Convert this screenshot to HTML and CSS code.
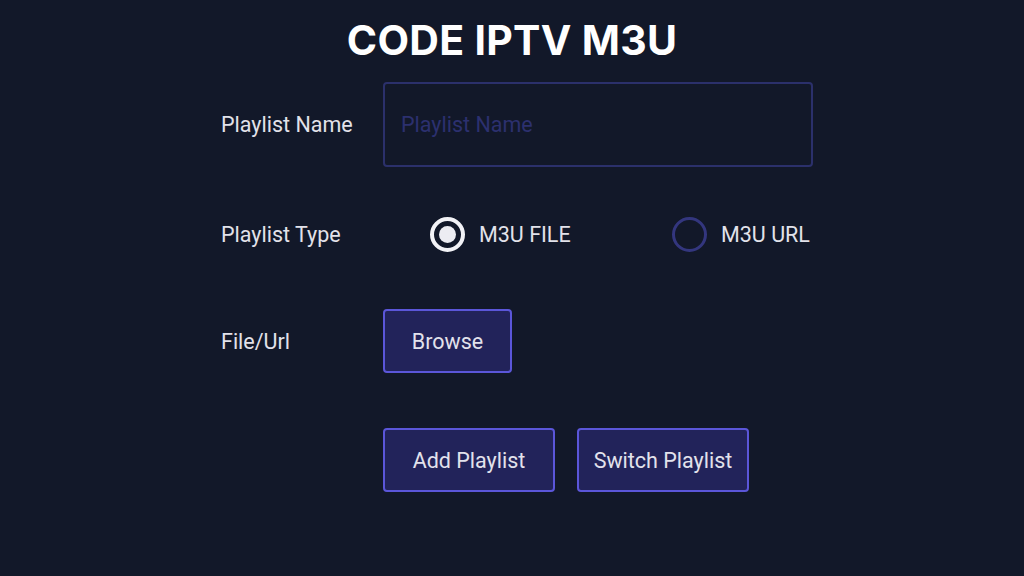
FILE: index.html
```html
<!DOCTYPE html>
<html lang="en">
<head>
<meta charset="utf-8">
<title>CODE IPTV M3U</title>
<link rel="stylesheet" href="styles.css">
</head>
<body>
<main class="page">
  <h1 class="title">CODE IPTV M3U</h1>
  <form class="form">
    <div class="row row-name">
      <label class="label" for="pname">Playlist Name</label>
      <input class="input" id="pname" type="text" placeholder="Playlist Name">
    </div>
    <div class="row row-type">
      <span class="label">Playlist Type</span>
      <div class="options">
        <span class="option">
          <span class="radio radio-on"><span class="dot"></span></span>
          <span class="option-text">M3U FILE</span>
        </span>
        <span class="option">
          <span class="radio radio-off"></span>
          <span class="option-text">M3U URL</span>
        </span>
      </div>
    </div>
    <div class="row row-file">
      <span class="label">File/Url</span>
      <button type="button" class="btn btn-browse">Browse</button>
    </div>
    <div class="row row-actions">
      <span class="label"></span>
      <div class="actions">
        <button type="button" class="btn btn-wide">Add Playlist</button>
        <button type="button" class="btn btn-wide">Switch Playlist</button>
      </div>
    </div>
  </form>
</main>
</body>
</html>
```
FILE: styles.css
```css
html, body {
  margin: 0;
  padding: 0;
  background: #121829;
  width: 1024px;
  height: 576px;
  overflow: hidden;
}
body {
  font-family: Roboto, "Liberation Sans", sans-serif;
  color: #e4e4ec;
}
.page {
  display: flex;
  flex-direction: column;
  align-items: center;
}
.title {
  margin: 16px 0 0;
  font-family: Inter, Roboto, sans-serif;
  font-weight: 700;
  font-size: 41px;
  line-height: 48px;
  color: #ffffff;
  letter-spacing: 0.3px;
}
.form {
  margin-top: 18px;
  width: 592px;
  margin-left: 10px;
  display: flex;
  flex-direction: column;
}
.row {
  display: flex;
  align-items: center;
}
.label {
  width: 162px;
  flex: none;
  font-size: 21.5px;
  color: #e2e2ea;
}
.input {
  box-sizing: border-box;
  width: 431px;
  height: 85px;
  background: transparent;
  border: 2px solid #2b306b;
  border-radius: 4px;
  padding: 0 0 0 16px;
  font-family: Roboto, sans-serif;
  font-size: 21.5px;
  color: #e2e2ea;
  outline: none;
}
.input::placeholder {
  color: #2c306f;
}
.row-type {
  margin-top: 50px;
  height: 34px;
}
.options {
  display: flex;
  padding-left: 47px;
}
.option {
  display: flex;
  align-items: center;
  gap: 14px;
  width: 242px;
}
.option-text {
  font-size: 21.5px;
  color: #e2e2ea;
}
.radio {
  box-sizing: border-box;
  width: 35px;
  height: 35px;
  border-radius: 50%;
  display: flex;
  align-items: center;
  justify-content: center;
  flex: none;
}
.radio-on {
  border: 4px solid #f2f2f6;
}
.radio-off {
  border: 3px solid #33367e;
}
.dot {
  width: 17px;
  height: 17px;
  border-radius: 50%;
  background: #ececf2;
}
.row-file {
  margin-top: 58px;
}
.btn {
  box-sizing: border-box;
  height: 64px;
  background: #22235a;
  border: 2.5px solid #5b56d9;
  border-radius: 4px;
  font-family: Roboto, sans-serif;
  font-size: 21.5px;
  color: #e2e2ec;
  padding: 0;
  cursor: pointer;
}
.btn-browse {
  width: 129px;
}
.row-actions {
  margin-top: 55px;
}
.actions {
  display: flex;
  gap: 22px;
}
.btn-wide {
  width: 172px;
}
```
